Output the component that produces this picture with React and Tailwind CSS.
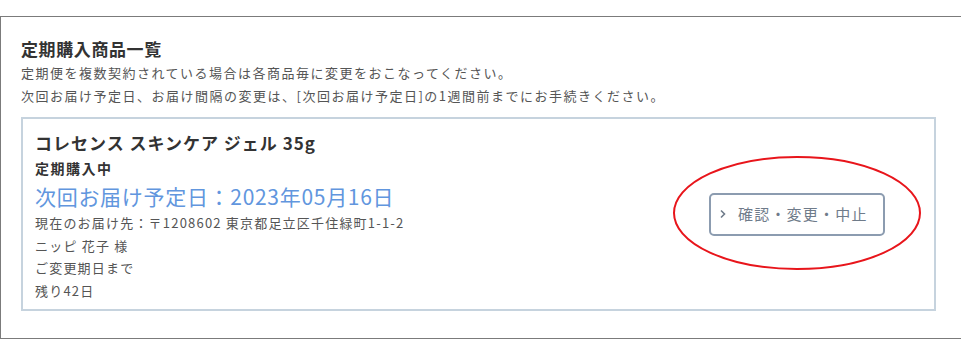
const font = { fontFamily: '"Noto Sans CJK JP", "Noto Sans", sans-serif' }

function ActionButton() {
  return (
    <div className="relative flex items-center justify-center w-[250px] h-[116px]">
      {/* red annotation ring */}
      <svg
        viewBox="0 0 250 116"
        className="absolute inset-0 w-full h-full pointer-events-none"
        aria-hidden
      >
        <ellipse cx="125" cy="57" rx="123" ry="56" fill="none" stroke="#e8151b" strokeWidth="2" />
      </svg>
      <button className="relative flex items-center gap-[11px] h-[43px] w-[176px] pl-[8px] rounded-[5px] border-2 border-[#8c9cb0] bg-white text-[15px] text-[#6f7b8a] tracking-[1.2px]">
        <svg width="8" height="10" viewBox="0 0 8 10" aria-hidden>
          <path d="M2 1.5 L5.5 5 L2 8.5" fill="none" stroke="#6f7b8a" strokeWidth="1.6" />
        </svg>
        <span>確認・変更・中止</span>
      </button>
    </div>
  )
}

export default function App() {
  return (
    <div className="w-[961px] h-[344px] bg-white overflow-hidden pt-4" style={font}>
      <div className="w-[1000px] h-[323px] border-[1.5px] border-[#7b7b7b] pl-[20px] pt-[21px]">
        <h2 className="text-[17px] leading-[22px] font-bold text-[#333] tracking-[0.6px]">定期購入商品一覧</h2>
        <p className="mt-[1px] text-[13px] leading-[23px] text-[#555] tracking-[1.5px]">
          定期便を複数契約されている場合は各商品毎に変更をおこなってください。
          <br />
          次回お届け予定日、お届け間隔の変更は、[次回お届け予定日]の1週間前までにお手続きください。
        </p>

        <div className="mt-[10px] w-[915px] h-[194px] border-2 border-[#c6d3de] flex items-center justify-between pl-[12px] pr-[12px]">
          <div className="self-start pt-[13px]">
            <div className="text-[17px] leading-[22px] font-bold text-[#333] tracking-[1px]">コレセンス スキンケア ジェル 35g</div>
            <div className="mt-[3px] text-[14px] leading-[22px] font-bold text-[#333] tracking-[1.5px]">定期購入中</div>
            <div className="mt-[1px] text-[21px] leading-[32px] text-[#6196de] tracking-[0.7px]">次回お届け予定日：2023年05月16日</div>
            <div className="text-[13px] leading-[22.5px] text-[#555] tracking-[1.2px]">
              <div>現在のお届け先：〒1208602 東京都足立区千住緑町1-1-2</div>
              <div>ニッピ 花子 様</div>
              <div>ご変更期日まで</div>
              <div>残り42日</div>
            </div>
          </div>
          <ActionButton />
        </div>
      </div>
    </div>
  )
}
